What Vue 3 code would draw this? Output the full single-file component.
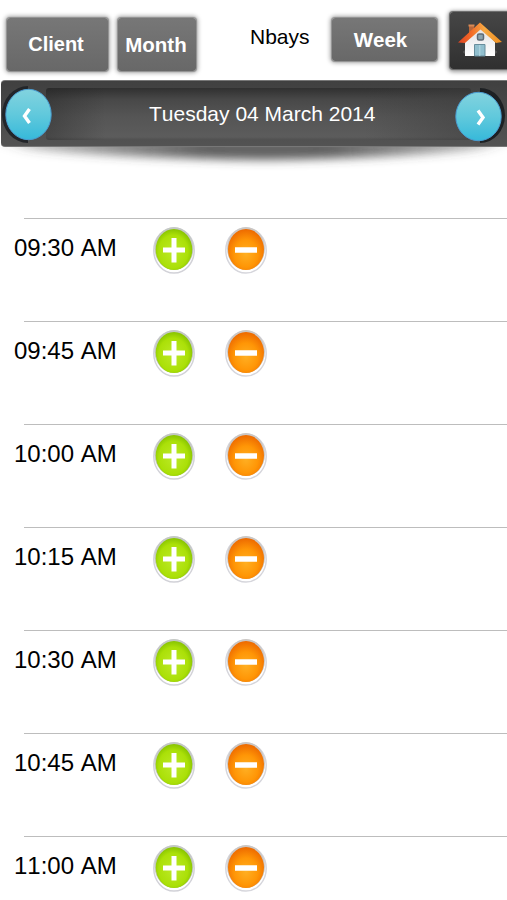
<script setup>
const times = ['09:30 AM', '09:45 AM', '10:00 AM', '10:15 AM', '10:30 AM', '10:45 AM', '11:00 AM']
</script>

<template>
  <main class="screen">
    <header class="toolbar">
      <button class="btn client">Client</button>
      <button class="btn month">Month</button>
      <span class="user">Nbays</span>
      <button class="btn week">Week</button>
      <button class="home" aria-label="Home">
        <svg width="46" height="38" viewBox="0 0 46 38">
          <defs>
            <linearGradient id="roof" x1="0" x2="1" y1="0" y2="0">
              <stop offset="0" stop-color="#dc4222" />
              <stop offset=".3" stop-color="#f36a27" />
              <stop offset=".6" stop-color="#f7a943" />
              <stop offset="1" stop-color="#ed8e20" />
            </linearGradient>
            <linearGradient id="wall" x1="0" x2="0" y1="0" y2="1">
              <stop offset="0" stop-color="#e0e0e3" />
              <stop offset="1" stop-color="#fff" />
            </linearGradient>
          </defs>
          <ellipse cx="23" cy="31" rx="17" ry="4" fill="#777" opacity=".5" />
          <path d="M12 4h5v8l-5 5z" fill="#b9673b" />
          <path d="M11.500 3.500h6v2h-6z" fill="#d98a55" />
          <path d="M8 21 23.500 6 38 21v14H8z" fill="url(#wall)" />
          <path d="M1 21.500 23 1.500 45 21l-6 1L23.500 8.500 8 22z" fill="url(#roof)" />
          <rect x="20.500" y="13" width="6" height="6" rx="1.500" fill="#8aa3ae" stroke="#5d6a75" stroke-width="1.500" />
          <path d="M17.500 35V23.500h10.500V35z" fill="#91bfce" stroke="#688d9c" />
          <path d="M22.800 24v11" stroke="#b7dbe5" />
        </svg>
      </button>
    </header>

    <section class="banner">
      <button class="nav prev" aria-label="Previous day">
        <svg width="54" height="64" viewBox="0 0 54 64">
          <defs>
            <linearGradient id="blue" x1="0" x2="0" y1="0" y2="1">
              <stop offset="0" stop-color="#82d3df" />
              <stop offset=".5" stop-color="#61c9dc" />
              <stop offset="1" stop-color="#36b9da" />
            </linearGradient>
          </defs>
          <path d="M27 4A26 28.500 0 0 0 27 61z" fill="#222529" />
          <ellipse cx="27.500" cy="32.500" rx="22.700" ry="25.200" fill="url(#blue)" stroke="#4a9cd2" />
          <path d="m28.500 27-5 7 5 7" fill="none" stroke="#fff" stroke-width="3.400" />
        </svg>
      </button>
      <div class="date">Tuesday 04 March 2014</div>
      <button class="nav next" aria-label="Next day">
        <svg width="54" height="64" viewBox="0 0 54 64">
          <path d="M27 6A25 27.500 0 0 1 27 61z" fill="#1d2023" />
          <ellipse cx="25.500" cy="34.500" rx="22.700" ry="24.200" fill="url(#blue)" stroke="#4a9cd2" />
          <path d="m25 28.500 5 7-5 7" fill="none" stroke="#fff" stroke-width="3.400" />
        </svg>
      </button>
    </section>
    <svg class="shade" width="507" height="28" viewBox="0 0 507 28">
      <defs>
        <filter id="soft" x="-10%" y="-60%" width="120%" height="220%">
          <feGaussianBlur stdDeviation="10 5" />
        </filter>
        <linearGradient id="shadow" x1="0" x2="1" y1="0" y2="0">
          <stop offset="0" stop-color="#444" stop-opacity=".3" />
          <stop offset=".4" stop-color="#444" stop-opacity=".85" />
          <stop offset=".65" stop-color="#444" stop-opacity=".85" />
          <stop offset="1" stop-color="#444" stop-opacity=".3" />
        </linearGradient>
      </defs>
      <path d="M0-8H507L480 2Q400 11 265 13Q120 11 30 2z" fill="url(#shadow)" filter="url(#soft)" />
    </svg>

    <svg class="defs" width="0" height="0">
      <defs>
        <radialGradient id="green" cx=".48" cy=".55" r=".57">
          <stop offset="0" stop-color="#bce928" />
          <stop offset=".7" stop-color="#abe008" />
          <stop offset="1" stop-color="#83c000" />
        </radialGradient>
        <radialGradient id="orange" cx=".5" cy=".6" r=".6">
          <stop offset="0" stop-color="#ffaf22" />
          <stop offset=".55" stop-color="#ff9606" />
          <stop offset="1" stop-color="#ed6900" />
        </radialGradient>
      </defs>
    </svg>
    <ul class="slots">
      <li v-for="time in times" :key="time" class="slot">
        <span class="time">{{ time }}</span>
        <button class="round" aria-label="Add">
          <svg width="44" height="50" viewBox="0 0 44 50">
            <ellipse cx="22" cy="25.500" rx="20.200" ry="22.500" fill="#fff" stroke="#d2d2d8" stroke-width="1.500" />
            <ellipse cx="22" cy="23.500" rx="19.500" ry="21.500" fill="#c4c8c4" />
            <ellipse cx="22" cy="24.500" rx="18.300" ry="20.500" fill="url(#green)" />
            <path d="M22 13v24.500M11 25h22" stroke="#fff" stroke-width="5" />
          </svg>
        </button>
        <button class="round" aria-label="Remove">
          <svg width="44" height="50" viewBox="0 0 44 50">
            <ellipse cx="22" cy="25.500" rx="20.200" ry="22.500" fill="#fff" stroke="#d6d6dc" stroke-width="1.500" />
            <ellipse cx="22" cy="23.500" rx="19" ry="21.500" fill="#cbc7c4" />
            <ellipse cx="22" cy="24.500" rx="18" ry="20.500" fill="url(#orange)" />
            <path d="M11 25h22" stroke="#fff" stroke-width="5.500" />
          </svg>
        </button>
      </li>
    </ul>
  </main>
</template>

<style>
body {
  margin: 0;
  background: #fff;
}
</style>

<style scoped>
.screen {
  width: 507px;
  height: 900px;
  overflow: hidden;
  background: #fff;
  font-family: "Liberation Sans", Arial, sans-serif;
  font-kerning: none;
  color: #000;
}
button {
  border: 0;
  padding: 0;
  margin: 0;
  font-family: inherit;
  font-kerning: none;
  background: none;
}
svg {
  display: block;
}
.toolbar {
  display: flex;
  align-items: flex-start;
  height: 80px;
}
.btn {
  flex: none;
  box-sizing: border-box;
  height: 53px;
  margin-top: 18px;
  border-radius: 3px;
  background: linear-gradient(#777, #686868);
  box-shadow: 0 0 1px 1px #909090, 0 0 4px 2px #aaa;
  color: #fff;
  font-weight: bold;
  font-size: 20px;
  line-height: 23px;
}
.client {
  width: 101px;
  margin-left: 7px;
  padding-right: 3px;
}
.month {
  width: 78px;
  margin-left: 10px;
  padding-right: 2px;
  font-size: 20.500px;
}
.user {
  flex: none;
  width: 82px;
  margin: 25px 0 0 54px;
  font-size: 21px;
  line-height: 23px;
}
.week {
  width: 105px;
  height: 43px;
  padding-right: 8px;
  font-size: 20.500px;
}
.home {
  display: flex;
  align-items: flex-start;
  flex: none;
  width: 62px;
  height: 57px;
  margin: 12px 0 0 13px;
  padding: 9px 0 0 7px;
  box-sizing: border-box;
  border-radius: 3px;
  background: linear-gradient(#464646, #303030);
  box-shadow: 0 0 1px 1px #666, 0 1px 4px 2px #999;
}
.banner {
  display: flex;
  box-sizing: border-box;
  width: 507px;
  height: 67px;
  margin-left: 1px;
  padding-top: 1px;
  border-top: 1px solid #777;
  border-bottom: 1px solid #777;
  border-radius: 4px 0 0 4px;
  background: linear-gradient(#404040, #494949 50%, #535353);
}
.nav {
  flex: none;
  width: 54px;
  height: 64px;
  z-index: 1;
}
.prev {
  margin-right: -9px;
}
.next {
  margin-left: -18px;
}
.date {
  flex: none;
  box-sizing: border-box;
  width: 425px;
  height: 52px;
  margin-top: 6px;
  padding-left: 103px;
  border-radius: 3px;
  background: linear-gradient(90deg, rgba(30, 30, 30, .35), transparent 14%, transparent 75%, rgba(60, 60, 60, .5)), linear-gradient(#303030, #484848 22%, #555 55%, #5c5c5c 94%, #505050);
  color: #fff;
  font-size: 21px;
  line-height: 51px;
  white-space: nowrap;
}
.shade {
  height: 28px;
}
.defs {
  height: 0;
}
.slots {
  margin: 43px 0 0;
  padding: 0;
  list-style: none;
}
.slot {
  display: flex;
  align-items: flex-start;
  box-sizing: border-box;
  height: 103px;
  margin-left: 24px;
  border-top: 1px solid #bdbdbd;
}
.time {
  flex: none;
  width: 138px;
  margin: 15px 0 0 -10px;
  font-size: 24px;
  line-height: 27px;
}
.round {
  flex: none;
  width: 44px;
  height: 50px;
  margin-top: 6px;
}
.round + .round {
  margin-left: 28px;
}
</style>
